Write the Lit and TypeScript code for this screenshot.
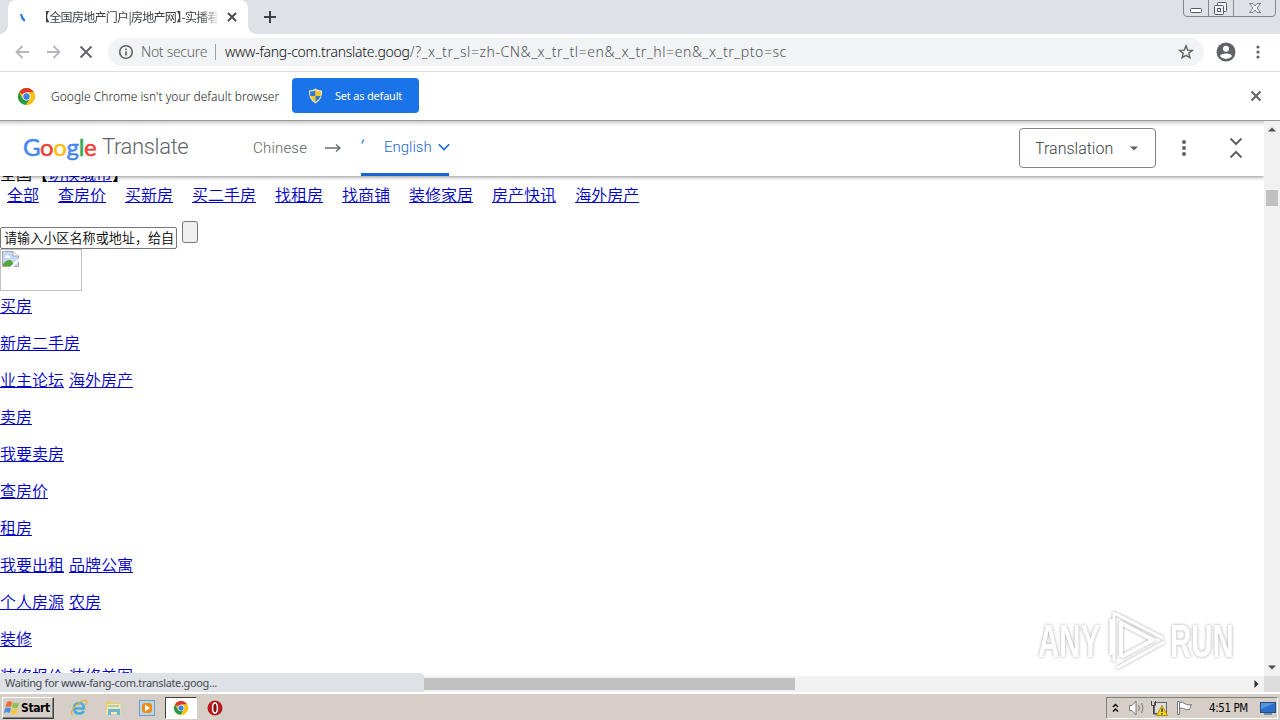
import { LitElement, css, html, svg } from 'lit';
import { customElement } from 'lit/decorators.js';

const navLinks = ['全部', '查房价', '买新房', '买二手房', '找租房', '找商铺', '装修家居', '房产快讯', '海外房产'];

const rows = [
  ['买房'],
  ['新房二手房'],
  ['业主论坛', '海外房产'],
  ['卖房'],
  ['我要卖房'],
  ['查房价'],
  ['租房'],
  ['我要出租', '品牌公寓'],
  ['个人房源', '农房'],
  ['装修'],
  ['装修报价', '装修美图'],
];

const chromeMark = svg`
  <circle cx="12" cy="12" r="12" fill="#fbc116" />
  <path d="M12 12L1.600 6A12 12 0 0 1 22.400 6H12z" fill="#d93a2e" />
  <path d="M1.600 6A12 12 0 0 0 11 24L17.200 15 12 12 6.800 15z" fill="#269a48" />
  <path d="M12 6H22.400A12 12 0 0 1 11 24L17.200 15z" fill="#fbc116" />
  <circle cx="12" cy="12" r="5.600" fill="#fff" />
  <circle cx="12" cy="12" r="4.500" fill="#3f7fe8" />
`;

@customElement('browser-chrome')
export class BrowserChrome extends LitElement {
  static styles = css`
    :host {
      display: block;
      flex: none;
      font-family: 'Noto Sans', 'Noto Sans CJK SC', sans-serif;
      font-weight: 350;
      color: #3c4043;
    }
    svg {
      display: block;
      flex: none;
    }
    .tabs {
      display: flex;
      height: 34px;
      background: #dee1e6;
    }
    .tab {
      display: flex;
      align-items: center;
      box-sizing: border-box;
      width: 240px;
      margin-left: 8px;
      padding: 0 11px 0 11px;
      background: #fff;
      border-radius: 8px 8px 0 0;
      position: relative;
    }
    .tab::before,
    .tab::after {
      content: '';
      position: absolute;
      bottom: 0;
      width: 8px;
      height: 8px;
    }
    .tab::before {
      left: -8px;
      background: radial-gradient(circle at 0 0, #dee1e6 7.5px, #fff 8px);
    }
    .tab::after {
      right: -8px;
      background: radial-gradient(circle at 100% 0, #dee1e6 7.5px, #fff 8px);
    }
    .title {
      width: 174px;
      margin: 0 10px 0 8px;
      overflow: hidden;
      white-space: nowrap;
      font: 12px/20px 'Noto Sans CJK SC', sans-serif;
      font-feature-settings: 'halt';
      letter-spacing: -0.7px;
      text-indent: 1px;
      -webkit-mask-image: linear-gradient(90deg, #000 156px, transparent 178px);
    }
    .plus {
      margin: 10px 0 0 15px;
    }
    .window {
      margin: 0 3px 0 auto;
    }
    .toolbar {
      display: flex;
      align-items: center;
      height: 36px;
      padding: 0 11px 1px 15px;
      background: #fff;
      border-bottom: 1px solid #d9dbde;
    }
    .nav {
      display: flex;
      gap: 18px;
      margin-right: 15px;
    }
    .omnibox {
      display: flex;
      align-items: center;
      box-sizing: border-box;
      width: 1096px;
      height: 28px;
      padding: 0 10px;
      border-radius: 14px;
      background: #f1f3f4;
      font-size: 14px;
      line-height: 28px;
      white-space: pre;
    }
    .secure {
      width: 67px;
      margin-left: 7px;
      color: #5f6368;
      letter-spacing: -0.3px;
    }
    .rule {
      width: 1px;
      height: 16px;
      margin: 0 9px 0 7px;
      background: #9aa0a6;
    }
    .host {
      color: #101113;
      letter-spacing: -0.26px;
    }
    .url {
      flex: 1;
      color: #505459;
      letter-spacing: 0.57px;
    }
    .avatar {
      margin: 0 19px 0 12px;
    }
    .infobar {
      display: flex;
      align-items: center;
      height: 48px;
      padding: 0 18px;
      background: #fff;
      border-bottom: 1px solid #999;
    }
    .message {
      width: 229px;
      margin: 0 12px 0 16px;
      color: #202124;
      font-size: 12px;
      letter-spacing: 0.02px;
      white-space: nowrap;
    }
    .default {
      display: flex;
      align-items: center;
      gap: 12px;
      box-sizing: border-box;
      width: 127px;
      height: 35px;
      margin-bottom: 1px;
      padding: 0 16px;
      border-radius: 4px;
      background: #1a73e8;
      color: #fff;
      font-size: 11px;
      font-weight: 400;
      letter-spacing: -0.2px;
      white-space: nowrap;
    }
    .dismiss {
      margin-left: auto;
    }
  `;

  render() {
    return html`
      <div class="tabs">
        <div class="tab">
          <svg width="16" height="16"><path d="M2 5Q2.800 9.500 5.800 12" fill="none" stroke="#1a73e8" stroke-width="2" /></svg>
          <span class="title">【全国房地产门户|房地产网】-实播看</span>
          <svg width="10" height="10" stroke="#45494d" stroke-width="1.800"><path d="M1 1L9 9M9 1L1 9" /></svg>
        </div>
        <svg class="plus" width="14" height="14" stroke="#3c4043" stroke-width="2"><path d="M7 1V13M1 7H13" /></svg>
        <svg class="window" width="94" height="18" fill="none" stroke="#85888f">
          <path d="M.5 0V13Q.5 16.500 4 16.500H89Q92.500 16.500 92.500 13V0M25.500 0V16M50.500 0V16" />
          <rect x="7.500" y="8.500" width="11" height="4" rx="1" fill="#fff" stroke="#555b68" />
          <g stroke="#555b68" fill="#f4f5f7">
            <rect x="34.500" y="2.500" width="9" height="9" rx="1" />
            <rect x="31.500" y="5.500" width="9" height="9" rx="1" />
            <rect x="34.500" y="8.500" width="3" height="3" />
          </g>
          <path d="M66.500 3.500H70L72 6 74 3.500H77.500L74 8 77.500 12.500H74L72 10 70 12.500H66.500L70 8z" fill="#fff" stroke="#555b68" stroke-width=".8" />
        </svg>
      </div>
      <div class="toolbar">
        <div class="nav">
          <svg width="14" height="14" fill="none" stroke="#b4b6b9" stroke-width="1.800"><path d="M14 7H1.500M7.500 1L1.500 7 7.500 13" /></svg>
          <svg width="14" height="14" fill="none" stroke="#b4b6b9" stroke-width="1.800"><path d="M0 7H12.500M6.500 1L12.500 7 6.500 13" /></svg>
          <svg width="14" height="14" stroke="#5f6368" stroke-width="1.900"><path d="M1.500 1.500L12.500 12.500M12.500 1.500L1.500 12.500" /></svg>
        </div>
        <div class="omnibox">
          <svg width="16" height="16" fill="none" stroke="#5f6368" stroke-width="1.600">
            <circle cx="8" cy="8" r="6.300" />
            <path d="M8 7.200V11.500M8 4.500V6.100" />
          </svg>
          <span class="secure">Not secure</span>
          <span class="rule"></span>
          <span class="url"><span class="host">www-fang-com.translate.goog</span>/?_x_tr_sl=zh-CN&amp;_x_tr_tl=en&amp;_x_tr_hl=en&amp;_x_tr_pto=sc</span>
          <svg width="16" height="16" fill="none" stroke="#5f6368" stroke-width="1.400">
            <path d="M8 1.800L9.700 6.100 14.300 6.400 10.800 9.300 11.900 13.800 8 11.300 4.100 13.800 5.200 9.300 1.700 6.400 6.300 6.100z" />
          </svg>
        </div>
        <svg class="avatar" width="20" height="20" viewBox="0 0 20 20">
          <circle cx="10" cy="10" r="9.500" fill="#5f6368" />
          <circle cx="10" cy="6.800" r="3" fill="#fff" />
          <path d="M4 14.200Q4.600 11.400 10 11.400T16 14.200Q13.600 17 10 17T4 14.200z" fill="#fff" />
        </svg>
        <svg width="6" height="16" fill="#5f6368">
          <circle cx="3" cy="3" r="1.600" /><circle cx="3" cy="8" r="1.600" /><circle cx="3" cy="13" r="1.600" />
        </svg>
      </div>
      <div class="infobar">
        <svg width="17" height="17" viewBox="0 0 24 24">${chromeMark}</svg>
        <span class="message">Google Chrome isn't your default browser</span>
        <div class="default">
          <svg width="15" height="16" viewBox="0 0 16 16">
            <path d="M8 0Q11 2 15 2Q16 11 8 16Q0 11 1 2Q5 2 8 0z" fill="#e9e3bd" />
            <path d="M8 2V8H2.500Q2 6 2.300 3.300Q5.500 3.200 8 2z" fill="#3378cb" />
            <path d="M8 2Q10.500 3.200 13.700 3.300Q14 6 13.500 8H8z" fill="#f6c623" />
            <path d="M2.500 8H8V14.300Q3.800 12 2.500 8z" fill="#f6c623" />
            <path d="M8 8H13.500Q12.200 12 8 14.300z" fill="#3378cb" />
          </svg>
          <span>Set as default</span>
        </div>
        <svg class="dismiss" width="12" height="12" stroke="#5f6368" stroke-width="2"><path d="M1.500 1.500L10.500 10.500M10.500 1.500L1.500 10.500" /></svg>
      </div>
    `;
  }
}

@customElement('translate-bar')
export class TranslateBar extends LitElement {
  static styles = css`
    :host {
      display: flex;
      align-items: center;
      flex: none;
      box-sizing: border-box;
      height: 55px;
      padding: 0 21px 1px 23px;
      background: linear-gradient(#cdcdcd, #fff 5px);
      box-shadow: 0 1px 4px rgb(0 0 0 / 45%);
      font-family: Roboto, sans-serif;
      font-weight: 350;
      color: #5f6368;
      position: relative;
      white-space: nowrap;
    }
    svg {
      display: block;
      flex: none;
    }
    .logo {
      width: 75px;
      margin-right: 4px;
      padding-bottom: 3px;
      font: 24px/30px Lato, sans-serif;
      -webkit-text-stroke: 0.5px;
      letter-spacing: -0.35px;
    }
    .blue {
      color: #4285f4;
    }
    .red {
      color: #ea4335;
    }
    .yellow {
      color: #fbbc05;
    }
    .green {
      color: #34a853;
    }
    .product {
      width: 87px;
      padding-bottom: 2px;
      font-size: 22px;
      line-height: 30px;
      letter-spacing: -0.35px;
    }
    .source {
      width: 54px;
      margin: 0 18px 0 64px;
      font-size: 15px;
      letter-spacing: 0.2px;
    }
    .target {
      display: flex;
      align-items: center;
      box-sizing: border-box;
      width: 88px;
      height: 55px;
      margin: 0 0 -1px 20px;
      border-bottom: 3px solid #1967d2;
      border-radius: 2px 2px 0 0;
      color: #1967d2;
      font-size: 15px;
    }
    .english {
      width: 48px;
      margin: 0 6px 0 18px;
    }
    .mode {
      display: flex;
      align-items: center;
      justify-content: space-between;
      box-sizing: border-box;
      width: 137px;
      height: 40px;
      margin: 0 19px 0 auto;
      padding: 0 17px 0 15px;
      border: 1px solid #80868b;
      border-radius: 4px;
      color: #3c4043;
      font-size: 16px;
    }
    .fold {
      margin-left: 36px;
    }
  `;

  render() {
    return html`
      <span class="logo"><span class="blue">G</span><span class="red">o</span><span class="yellow">o</span><span class="blue">g</span><span class="green">l</span><span class="red">e</span></span>
      <span class="product">Translate</span>
      <span class="source">Chinese</span>
      <svg width="16" height="10" fill="none" stroke="#6b6f73" stroke-width="1.500"><path d="M0 5H15M11 1.500L15 5 11 8.500" /></svg>
      <div class="target">
        <svg width="5" height="18"><path d="M1 5.500Q1.500 3 3 1.500" fill="none" stroke="#4a80d9" stroke-width="1.500" /></svg>
        <span class="english">English</span>
        <svg width="12" height="8" fill="none" stroke="#1967d2" stroke-width="1.600"><path d="M.8 1.200L6 6.500 11.200 1.200" /></svg>
      </div>
      <div class="mode">
        <span>Translation</span>
        <svg width="8" height="5"><path d="M0 .5H8L4 4.500z" fill="#5f6368" /></svg>
      </div>
      <svg width="18" height="18" fill="#5f6368"><circle cx="9" cy="3" r="2" /><circle cx="9" cy="9" r="2" /><circle cx="9" cy="15" r="2" /></svg>
      <svg class="fold" width="14" height="22" fill="none" stroke="#5f6368" stroke-width="2"><path d="M1.500 1.500L7 7 12.500 1.500M1.500 20.500L7 15 12.500 20.500" /></svg>
    `;
  }
}

@customElement('web-page')
export class WebPage extends LitElement {
  static styles = css`
    :host {
      display: flex;
      flex-direction: column;
      width: 1264px;
      height: 555px;
      overflow: hidden;
      background: #fff;
      color: #000;
      font: 16px/21px 'Noto Sans CJK SC', sans-serif;
      font-weight: 350;
      white-space: nowrap;
    }
    a {
      color: #0000c8;
      text-decoration: underline;
      text-underline-offset: 1px;
    }
    .city {
      margin-top: -13px;
      height: 21px;
      flex: none;
    }
    .links {
      display: flex;
      flex: none;
      gap: 19px;
      padding-left: 7px;
      height: 36px;
    }
    .search {
      display: flex;
      flex: none;
      gap: 5px;
      height: 28px;
      padding-top: 1px;
      box-sizing: border-box;
    }
    .field {
      box-sizing: border-box;
      width: 177px;
      height: 22px;
      margin-top: 6px;
      padding: 0 3px;
      overflow: hidden;
      border: 1px solid #767676;
      border-radius: 2px;
      font-size: 13.100px;
      line-height: 19px;
    }
    .go {
      box-sizing: border-box;
      width: 16px;
      height: 22px;
      border: 1px solid #767676;
      border-radius: 3px;
      background: #efefef;
    }
    .picture {
      box-sizing: border-box;
      flex: none;
      width: 82px;
      height: 42px;
      margin-top: 1px;
      padding: 1px;
      border: 1px solid #c0c0c0;
    }
    .picture svg {
      display: block;
    }
    p {
      margin: 0 0 16px;
      height: 21px;
      word-spacing: 1.400px;
    }
    .list {
      padding-top: 4px;
    }
  `;

  render() {
    return html`
      <translate-bar></translate-bar>
      <div class="city">全国【<a>切换城市</a>】</div>
      <div class="links">${navLinks.map((label) => html`<a>${label}</a>`)}</div>
      <div class="search">
        <div class="field">请输入小区名称或地址，给自</div>
        <div class="go"></div>
      </div>
      <div class="picture">
        <svg width="18" height="16">
          <path d="M.5.500H11L16.500 5V15.500H.5z" fill="#c5d8f8" stroke="#a8a8a8" />
          <path d="M1 15V13Q6 7 10 10L12 15z" fill="#53a839" />
          <path d="M3 6Q4 3.500 6 4.500Q8 4.500 8 7H3z" fill="#fff" />
          <path d="M8 16L17 7V10L11 16z" fill="#fff" />
          <path d="M11 .5V5H16.500" fill="#fff" stroke="#a8a8a8" />
        </svg>
      </div>
      <div class="list">
        ${rows.map((row) => html`<p>${row.map((label, i) => html`${i ? ' ' : ''}<a>${label}</a>`)}</p>`)}
      </div>
    `;
  }
}

@customElement('task-bar')
export class TaskBar extends LitElement {
  static styles = css`
    :host {
      display: flex;
      align-items: center;
      flex: none;
      box-sizing: border-box;
      height: 28px;
      padding: 1px 2px 0;
      background: #d5cfc7;
      border-top: 2px solid #fff;
      color: #000;
      font: 11px/20px 'DejaVu Sans', sans-serif;
      white-space: nowrap;
    }
    svg {
      display: block;
      flex: none;
    }
    .start {
      display: flex;
      align-items: center;
      box-sizing: border-box;
      width: 52px;
      height: 22px;
      padding-left: 1px;
      border: 1px solid;
      border-color: #fff #404040 #404040 #fff;
      box-shadow: inset -1px -1px #808080;
      font: bold 12px 'DejaVu Sans Condensed', 'DejaVu Sans', sans-serif;
      letter-spacing: -0.4px;
    }
    .apps {
      display: flex;
      align-items: center;
      margin-left: 8px;
    }
    .app {
      display: flex;
      justify-content: center;
      align-items: center;
      box-sizing: border-box;
      width: 34px;
      height: 22px;
    }
    .active {
      width: 32px;
      margin: 0 1px;
      background: #fff;
      border: 1px solid;
      border-color: #404040 #fff #fff #404040;
    }
    .tray {
      display: flex;
      align-items: center;
      box-sizing: border-box;
      width: 172px;
      height: 22px;
      margin-left: auto;
      padding-left: 5px;
      border: 1px solid;
      border-color: #808080 #fff #fff #808080;
    }
    .clock {
      width: 40px;
      margin: 0 11px 0 13px;
      font: 11.500px/20px 'DejaVu Sans Condensed', 'DejaVu Sans', sans-serif;
      letter-spacing: -0.4px;
    }
    .speaker {
      margin: 0 1px;
    }
  `;

  render() {
    return html`
      <div class="start">
        <svg width="17" height="16">
          <path d="M3 2Q5.500.500 8 2L7 7Q4.500 6 1.500 7z" fill="#ef6a35" />
          <path d="M9 2.500Q12 4 15 2.500L14 7.500Q11 9 8 7.500z" fill="#8cc152" />
          <path d="M1.300 8Q4 6.800 6.800 8L5.800 13Q3 11.500 0 13z" fill="#4a8fda" />
          <path d="M7.800 8.500Q11 10 13.800 8.500L12.800 13.500Q10 15 6.800 13.500z" fill="#f9c838" />
        </svg>
        <span>Start</span>
      </div>
      <div class="apps">
        <div class="app">
          <svg width="18" height="18" fill="none">
            <path d="M14.500 9.500H5M14 10Q14.200 4 9 4Q4 4.500 4 9.500Q4.500 14.500 9 14.500Q12.500 14.500 14 12" stroke="#49acdd" stroke-width="2.600" />
            <path d="M2.500 16Q-1 13.500 6 6.500Q13 0 16.500 1.800Q17.500 3 15.500 6" stroke="#e0b43c" stroke-width="1.300" />
          </svg>
        </div>
        <div class="app">
          <svg width="17" height="16">
            <path d="M1 1H6L7 2.500H14V13H1z" fill="#e9cf72" />
            <path d="M2.500 4H15.500V14H1z" fill="#f8e8a0" />
            <path d="M3 9H15V15H12V12H6V15H3z" fill="#69b5dd" />
            <path d="M3 6H14" stroke="#69b5dd" />
          </svg>
        </div>
        <div class="app">
          <svg width="17" height="16">
            <rect x=".5" y=".5" width="15" height="15" fill="#b9d7ec" stroke="#6f9dc3" />
            <rect x="3" y="3" width="10" height="10" rx="3" fill="#f48b15" />
            <path d="M6 4.500L11 8 6 11.500z" fill="#fff" />
          </svg>
        </div>
        <div class="app active"><svg width="14" height="14" viewBox="0 0 24 24">${chromeMark}</svg></div>
        <div class="app">
          <svg width="16" height="16">
            <circle cx="8" cy="8" r="7.500" fill="#b91a1d" />
            <ellipse cx="8" cy="8" rx="2.400" ry="5" fill="#8a1014" stroke="#fff" stroke-width="1.500" />
          </svg>
        </div>
      </div>
      <div class="tray">
        <svg width="8" height="12" fill="none" stroke="#000" stroke-width="1.400"><path d="M1 5L3.500 2.500 6 5M1 9.500L3.500 7 6 9.500" /></svg>
        <svg class="speaker" width="24" height="18" fill="none" stroke="#777">
          <path d="M8.500 6.500H11L15 2V16L11 11.500H8.500z" fill="#fff" />
          <path d="M17.500 6Q19.500 9 17.500 12M20.500 4Q23.500 9 20.500 14" />
        </svg>
        <svg width="26" height="18">
          <rect x="8.500" y="3.500" width="12" height="11" fill="#ddd" stroke="#666" />
          <path d="M5.500 2V6.500H9.500V2M7.500 6.500V15H11" fill="none" stroke="#444" />
          <path d="M16 6.500L21.500 16.500H10.500z" fill="#fbd526" stroke="#b18d00" />
          <path d="M16 9.500V13M16 14V15.500" stroke="#222" stroke-width="1.300" />
        </svg>
        <svg width="24" height="18" fill="#fff" stroke="#777">
          <path d="M7.500 3.500Q10 2 13.500 5Q16 6.500 19.500 5.500Q18 9 17.500 10.500Q14 11.500 11.500 9.500Q9.500 8.500 7.500 9.500z" />
          <path d="M5.500 2.500H7.500V15.500H5.500z" />
        </svg>
        <span class="clock">4:51 PM</span>
        <svg width="16" height="16">
          <rect x=".5" y="2.500" width="15" height="10" fill="#2c70ca" stroke="#264b80" />
          <path d="M1 3H15L1 9z" fill="#5794df" />
          <path d="M4 13H12V15H4z" fill="#708eae" />
        </svg>
      </div>
    `;
  }
}

@customElement('app-root')
export class AppRoot extends LitElement {
  static styles = css`
    :host {
      display: flex;
      flex-direction: column;
      width: 1280px;
      height: 720px;
      overflow: hidden;
      background: #fff;
      position: relative;
    }
    svg {
      display: block;
    }
    .view {
      display: flex;
      height: 555px;
      flex: none;
    }
    .vertical {
      display: flex;
      flex-direction: column;
      align-items: center;
      box-sizing: border-box;
      width: 16px;
      padding: 6px 0;
      background: #f1f1f1;
    }
    .vthumb {
      width: 12px;
      height: 16px;
      margin-top: 58px;
      background: #c1c1c1;
    }
    .down {
      margin-top: auto;
    }
    .horizontal {
      display: flex;
      align-items: center;
      height: 16px;
      flex: none;
      background: #f1f1f1;
    }
    .hthumb {
      width: 371px;
      height: 12px;
      margin-left: 424px;
      background: #c1c1c1;
    }
    .right {
      margin: 0 5px 0 auto;
    }
    .corner {
      width: 16px;
      height: 16px;
      background: #dcdcdc;
    }
    .status {
      position: absolute;
      left: 0;
      top: 673px;
      box-sizing: border-box;
      width: 424px;
      height: 19px;
      padding-left: 5px;
      border-radius: 0 4px 0 0;
      background: #dee1e6;
      color: #45494e;
      font: 11px/20px 'Noto Sans', sans-serif;
      letter-spacing: -0.34px;
    }
    .watermark {
      display: flex;
      align-items: center;
      position: absolute;
      left: 1038px;
      top: 608px;
      height: 66px;
      color: #fff;
      font: bold 46px/66px 'Liberation Sans', sans-serif;
      filter: drop-shadow(0 0 1.500px rgb(0 0 0 / 36%));
    }
    .word {
      display: block;
      width: 66px;
      transform: scaleX(0.64);
      transform-origin: 0 50%;
    }
  `;

  render() {
    return html`
      <browser-chrome></browser-chrome>
      <div class="view">
        <web-page></web-page>
        <div class="vertical">
          <svg width="8" height="5"><path d="M0 4.500L4 .5 8 4.500z" fill="#505050" /></svg>
          <div class="vthumb"></div>
          <svg class="down" width="8" height="5"><path d="M0 .5L4 4.500 8 .5z" fill="#505050" /></svg>
        </div>
      </div>
      <div class="horizontal">
        <div class="hthumb"></div>
        <svg class="right" width="5" height="8"><path d="M.5 0L4.500 4 .5 8z" fill="#303030" /></svg>
        <div class="corner"></div>
      </div>
      <task-bar></task-bar>
      <div class="status">Waiting for www-fang-com.translate.goog...</div>
      <div class="watermark">
        <span class="word">ANY</span>
        <svg width="66" height="66" fill="none" stroke="#fff" stroke-width="4" stroke-linejoin="round">
          <path d="M17 49V15L49 32 17 49" />
          <path d="M10 54V5L59 30M7 11V47M13 60L60 34" stroke-width="3" />
        </svg>
        <span class="word">RUN</span>
      </div>
    `;
  }
}
